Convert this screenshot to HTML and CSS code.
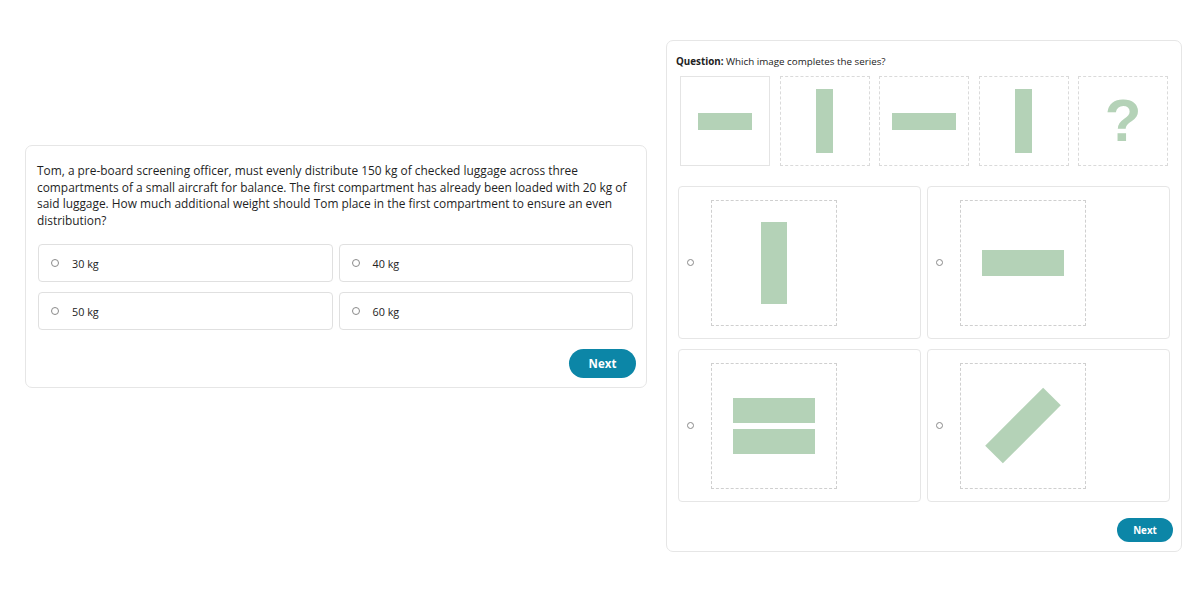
FILE: index.html
```html
<!DOCTYPE html>
<html>
<head>
<meta charset="utf-8">
<link rel="stylesheet" href="styles.css">
</head>
<body>
<div class="page">
  <section class="card card-left">
    <p class="prompt">Tom, a pre-board screening officer, must evenly distribute 150 kg of checked luggage across three compartments of a small aircraft for balance. The first compartment has already been loaded with 20 kg of said luggage. How much additional weight should Tom place in the first compartment to ensure an even distribution?</p>
    <div class="choices">
      <label class="choice"><span class="radio"></span><span>30 kg</span></label>
      <label class="choice"><span class="radio"></span><span>40 kg</span></label>
      <label class="choice"><span class="radio"></span><span>50 kg</span></label>
      <label class="choice"><span class="radio"></span><span>60 kg</span></label>
    </div>
    <div class="actions"><button class="btn">Next</button></div>
  </section>

  <section class="card card-right">
    <p class="q"><b>Question:</b> Which image completes the series?</p>
    <div class="series">
      <div class="tile solid"><span class="bar h-s"></span></div>
      <div class="tile"><span class="bar v-s"></span></div>
      <div class="tile"><span class="bar h-m"></span></div>
      <div class="tile"><span class="bar v-s"></span></div>
      <div class="tile"><span class="qmark">?</span></div>
    </div>
    <div class="answers">
      <label class="answer"><span class="radio sm"></span><div class="frame"><span class="bar v-l"></span></div></label>
      <label class="answer"><span class="radio sm"></span><div class="frame"><span class="bar h-l"></span></div></label>
      <label class="answer"><span class="radio sm"></span><div class="frame stack"><span class="bar h-l2"></span><span class="bar h-l2"></span></div></label>
      <label class="answer"><span class="radio sm"></span><div class="frame"><span class="bar diag"></span></div></label>
    </div>
    <div class="actions"><button class="btn btn-sm">Next</button></div>
  </section>
</div>
</body>
</html>
```

FILE: styles.css
```css
* { box-sizing: border-box; }
html, body { margin: 0; padding: 0; background: #fff; }
body {
  font-family: "Open Sans", "Liberation Sans", sans-serif;
  color: #222;
}
.page {
  display: flex;
  align-items: flex-start;
  padding-left: 25px;
  gap: 19px;
}
.card {
  background: #fff;
  border: 1px solid #e6e6e6;
  border-radius: 7px;
}
.card-left {
  width: 622px;
  margin-top: 145px;
  padding: 16px 10px 9px 11px;
}
.prompt {
  margin: 0;
  font-size: 11.9px;
  line-height: 16.6px;
  color: #1f1f1f;
}
.choices {
  margin: 16px 3px 0 1px;
  display: grid;
  grid-template-columns: 1fr 1fr;
  column-gap: 6px;
  row-gap: 10px;
}
.choice {
  height: 38px;
  display: flex;
  align-items: center;
  gap: 13px;
  padding-left: 12px;
  border: 1px solid #e0e0e0;
  border-radius: 4px;
  font-size: 10.8px;
  color: #222;
}
.radio {
  width: 8px;
  height: 8px;
  border: 1px solid #8a8a8a;
  border-radius: 50%;
  flex: none;
}
.radio.sm { width: 7px; height: 7px; }
.actions {
  display: flex;
  justify-content: flex-end;
}
.card-left .actions { margin-top: 19px; }
.btn {
  border: none;
  background: #0c86a7;
  color: #fff;
  font-family: inherit;
  font-weight: 700;
  font-size: 11.5px;
  width: 67px;
  height: 29px;
  border-radius: 15px;
  padding: 0;
}
.btn-sm {
  width: 56px;
  height: 24px;
  font-size: 9.8px;
  border-radius: 12px;
}

.card-right {
  width: 516px;
  margin-top: 40px;
  padding: 15px 8px 9px 9px;
}
.q {
  margin: 0;
  font-size: 9.8px;
  line-height: 12px;
  color: #222;
}
.q b { font-weight: 700; }
.series {
  margin: 8px 5px 0 4px;
  display: flex;
  justify-content: space-between;
}
.tile {
  width: 90px;
  height: 90px;
  border: 1px dashed #dadada;
  display: flex;
  align-items: center;
  justify-content: center;
}
.tile.solid { border-style: solid; border-color: #e4e4e4; }
.bar { display: block; background: #b4d2b7; }
.h-s { width: 54px; height: 17px; }
.h-m { width: 64px; height: 17px; }
.v-s { width: 17px; height: 64px; }
.qmark {
  font-family: "Liberation Sans", Arial, sans-serif;
  font-weight: 700;
  font-size: 60px;
  line-height: 1;
  color: #b4d2b7;
}
.answers {
  margin: 20px 3px 0 2px;
  display: grid;
  grid-template-columns: 1fr 1fr;
  column-gap: 6px;
  row-gap: 10px;
}
.answer {
  height: 153px;
  border: 1px solid #e6e6e6;
  border-radius: 4px;
  display: flex;
  align-items: center;
  padding-left: 8px;
  gap: 17px;
}
.frame {
  width: 126px;
  height: 126px;
  border: 1px dashed #cfcfcf;
  display: flex;
  align-items: center;
  justify-content: center;
  flex: none;
}
.frame.stack { flex-direction: column; gap: 6px; }
.v-l { width: 26px; height: 82px; }
.h-l { width: 82px; height: 26px; }
.h-l2 { width: 82px; height: 25px; }
.diag { width: 82px; height: 25px; transform: rotate(-45deg); }
.card-right .actions { margin-top: 16px; }
```
